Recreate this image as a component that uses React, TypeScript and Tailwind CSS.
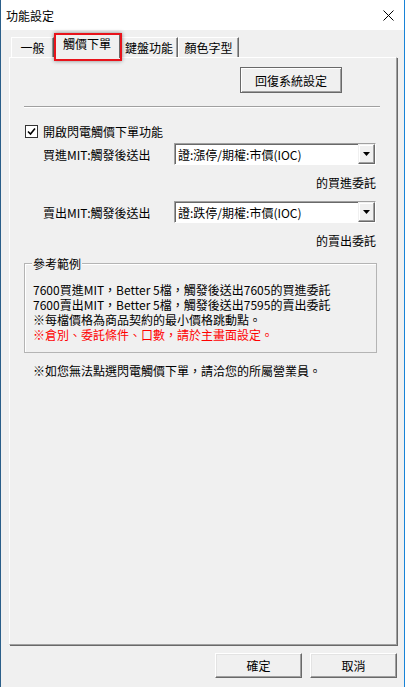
import type { ReactNode } from "react";

const exampleLines = [
  "7600買進MIT，Better 5檔，觸發後送出7605的買進委託",
  "7600賣出MIT，Better 5檔，觸發後送出7595的賣出委託",
  "※每檔價格為商品契約的最小價格跳動點。",
];

function Tab({ label, width }: { label: string; width: string }) {
  return (
    <div
      className={`${width} h-[20px] flex items-center justify-center border-t border-l border-white border-r border-r-[#696969] shadow-[inset_-1px_0_0_#a0a0a0]`}
    >
      {label}
    </div>
  );
}

function ActiveTab({ label }: { label: string }) {
  return (
    <div className="relative z-10 -mb-[1px] w-[66px] h-[25px] bg-[#f0f0f0] flex justify-center pt-[2px] border-t border-l border-white border-r border-r-[#696969]">
      {label}
      <div className="absolute -left-[1px] -top-[1px] w-[68px] h-[28px] border-2 border-[#e8131b] shadow-[0_0_4px_rgba(0,0,0,0.45)]" />
    </div>
  );
}

function Combo({ value }: { value: string }) {
  return (
    <div className="w-[202px] h-[22px] bg-white flex border-t border-l border-[#a0a0a0] border-r border-b border-r-white border-b-white shadow-[inset_1px_1px_0_#696969]">
      <div className="flex-1 pl-[3px] pt-[1px] flex items-center">{value}</div>
      <div className="w-[17px] h-[20px] bg-[#f0f0f0] flex items-center justify-center border-t border-l border-[#f0f0f0] border-r border-b border-r-[#696969] border-b-[#696969] shadow-[inset_-1px_-1px_0_#a0a0a0,inset_1px_1px_0_#ffffff]">
        <svg width="7" height="4" viewBox="0 0 7 4">
          <path d="M0 0H7L3.5 4Z" fill="#000" />
        </svg>
      </div>
    </div>
  );
}

function Button({ children, width, height, strong }: { children: ReactNode; width: string; height: string; strong?: boolean }) {
  return (
    <div
      className={`${width} ${height} flex items-center justify-center bg-[#f0f0f0] ${
        strong
          ? "border border-[#696969] shadow-[inset_1px_1px_0_#ffffff,inset_-1px_-1px_0_#a0a0a0]"
          : "border-t border-l border-white border-r border-b border-r-[#696969] border-b-[#696969] shadow-[inset_-1px_-1px_0_#a0a0a0,inset_1px_1px_0_#e3e3e3]"
      }`}
    >
      {children}
    </div>
  );
}

export default function App() {
  return (
    <div className="w-[405px] h-[687px] overflow-hidden bg-[#f0f0f0] border-l border-l-[#2b5f8a] border-r border-r-[#1883d7] flex flex-col text-[12px] leading-[15px] text-black font-['Noto_Sans_CJK_TC','Noto_Sans',sans-serif]">
      <div className="h-[30px] shrink-0 bg-white flex items-center justify-between pl-[5px] pr-[10px]">
        <span>功能設定</span>
        <svg width="11" height="11" viewBox="0 0 11 11">
          <path d="M0.5 0.5L10.5 10.5M10.5 0.5L0.5 10.5" stroke="#000" strokeWidth="1" />
        </svg>
      </div>

      <div className="flex items-end h-[27px] pl-[10px]">
        <Tab label="一般" width="w-[43px]" />
        <ActiveTab label="觸價下單" />
        <Tab label="鍵盤功能" width="w-[58px]" />
        <Tab label="顏色字型" width="w-[61px]" />
      </div>

      <div className="ml-[8px] w-[388px] h-[588px] shrink-0 flex flex-col border-t border-l border-white border-r border-b border-r-[#a0a0a0] border-b-[#a0a0a0] shadow-[1px_1px_0_#696969]">
        <div className="ml-[230px] mt-[9px]">
          <Button width="w-[102px]" height="h-[26px]" strong>
            回復系統設定
          </Button>
        </div>

        <div className="ml-[14px] mt-[13px] w-[356px] h-[2px] border-t border-[#a0a0a0] border-b border-b-white" />

        <div className="ml-[15px] mt-[17px] h-[13px] flex items-center gap-[5px]">
          <div className="w-[13px] h-[13px] bg-white border border-[#333333] flex items-center justify-center">
            <svg width="9" height="9" viewBox="0 0 9 9">
              <path d="M1 4.5L3.5 7L8 1.5" stroke="#000" strokeWidth="1.6" fill="none" />
            </svg>
          </div>
          <span>開啟閃電觸價下單功能</span>
        </div>

        <div className="ml-[33px] mt-[5px] h-[22px] flex items-center">
          <span className="w-[131px]">買進MIT:觸發後送出</span>
          <Combo value="證:漲停/期權:市價(IOC)" />
        </div>
        <div className="mt-[10px] w-[366px] text-right">的買進委託</div>

        <div className="ml-[33px] mt-[11px] h-[22px] flex items-center">
          <span className="w-[131px]">賣出MIT:觸發後送出</span>
          <Combo value="證:跌停/期權:市價(IOC)" />
        </div>
        <div className="mt-[10px] w-[366px] text-right">的賣出委託</div>

        <div className="relative ml-[14px] mt-[15px] w-[353px] h-[90px] border border-[#b4b4b4] shadow-[inset_1px_1px_0_#ffffff] pl-[8px] pt-[18px]">
          <span className="absolute -top-[8px] left-[7px] px-[1px] bg-[#f0f0f0]">參考範例</span>
          {exampleLines.map((line) => (
            <div key={line}>{line}</div>
          ))}
          <div className="text-[#ff0000]">※倉別、委託條件、口數，請於主畫面設定。</div>
        </div>

        <div className="ml-[23px] mt-[10px]">※如您無法點選閃電觸價下單，請洽您的所屬營業員。</div>
      </div>

      <div className="mt-[8px] flex justify-end gap-[8px] pr-[7px]">
        <Button width="w-[87px]" height="h-[25px]">確定</Button>
        <Button width="w-[87px]" height="h-[25px]">取消</Button>
      </div>
    </div>
  );
}
